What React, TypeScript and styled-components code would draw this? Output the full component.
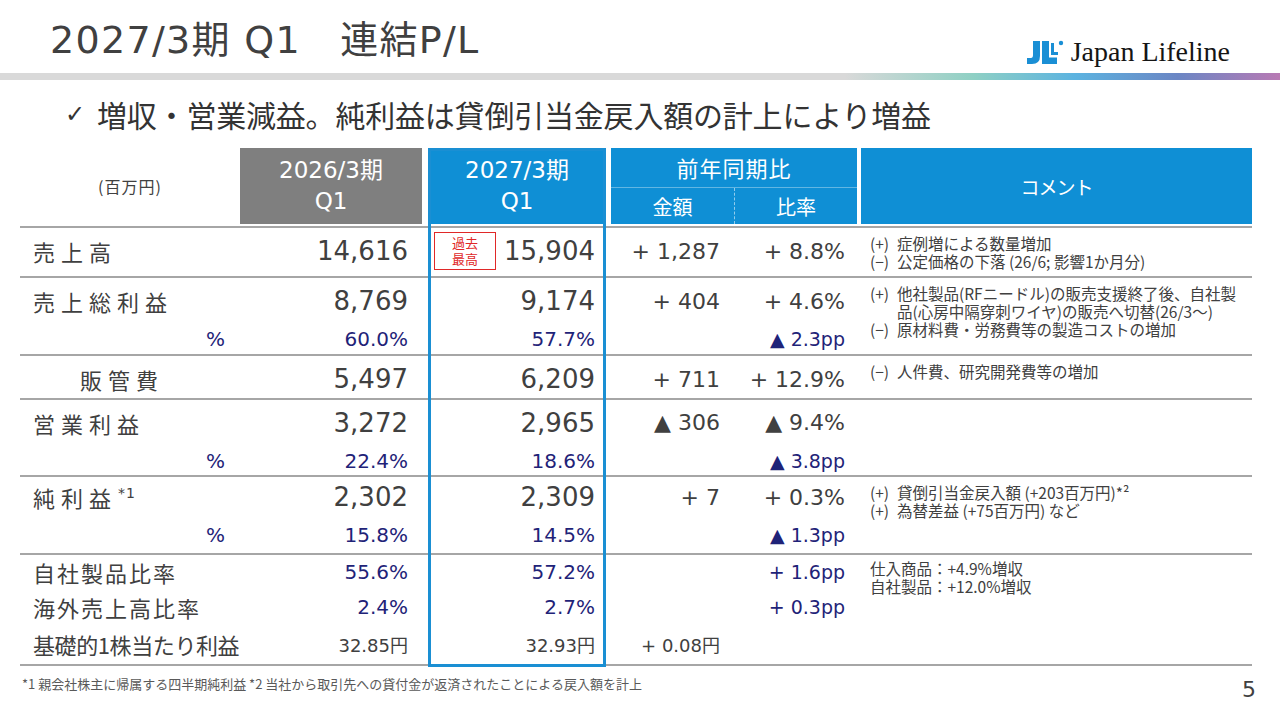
import React, { ReactNode } from "react";
import styled, { createGlobalStyle, css } from "styled-components";

const JP = `"Noto Sans CJK JP", "Noto Sans", sans-serif`;
const NUM = `"DejaVu Sans", "Noto Sans CJK JP", sans-serif`;
const SERIF = `"Liberation Serif", "DejaVu Serif", serif`;

const C = {
  text: "#404040",
  navy: "#1f2378",
  blue: "#0f8fd5",
  frame: "#1a8fd3",
  gray: "#7f7f7f",
  rule: "#a6a6a6",
  red: "#e02828",
};

const COLS =
  "[label] 220px [y26] 182px 6px [y27] 178px 5px [amt] 124px [rate] 122px 4px [cmt] 391px";

type Col = "label" | "y26" | "y27" | "amt" | "rate" | "cmt";
const PAD: Record<Col, number> = { label: 0, y26: 14, y27: 11, amt: 15, rate: 12, cmt: 0 };

const GlobalStyle = createGlobalStyle`
  html, body { margin: 0; padding: 0; background: #ffffff; }
  body { font-family: ${JP}; color: ${C.text}; }
  * { box-sizing: border-box; }
`;

const Page = styled.div`
  width: 1280px;
  height: 720px;
  overflow: hidden;
  background: #fff;
  display: flex;
  flex-direction: column;
`;

const TitleBar = styled.header`
  height: 73px;
  flex: none;
  display: flex;
  justify-content: space-between;
  align-items: flex-start;
  padding: 0 50px;
`;

const Title = styled.h1`
  margin: 18px 0 0;
  font-family: ${NUM};
  font-weight: 400;
  font-size: 38px;
  line-height: 44px;
  letter-spacing: 1.3px;
  color: ${C.text};
  white-space: pre;
`;

const Brand = styled.div`
  margin-top: 37px;
  display: flex;
  align-items: center;
  gap: 5px;
`;

const BrandName = styled.span`
  font-family: ${SERIF};
  font-size: 28px;
  line-height: 30px;
  color: #151515;
`;

const Rainbow = styled.div`
  height: 7px;
  flex: none;
  background: linear-gradient(
    90deg,
    #d9d9d9 0%,
    #d9d9d9 66%,
    #8fd0c4 76%,
    #5cb3e0 84%,
    #6b86c4 92%,
    #b97ab4 100%
  );
`;

const Lead = styled.p`
  margin: 14px 0 0 65px;
  height: 40px;
  display: flex;
  align-items: center;
  font-family: ${JP};
  font-size: 30px;
  letter-spacing: -0.2px;
  color: #333;
`;

const Check = styled.span`
  font-family: "DejaVu Sans", sans-serif;
  font-size: 24px;
  width: 32px;
  flex: none;
`;

const Table = styled.section`
  position: relative;
  margin: 14px 0 0 20px;
  width: 1232px;
  flex: none;
`;

const HighlightFrame = styled.div`
  position: absolute;
  left: 408px;
  top: 0;
  width: 178px;
  height: 519px;
  border: 3px solid ${C.frame};
  pointer-events: none;
`;

const Head = styled.div`
  display: grid;
  grid-template-columns: ${COLS};
  grid-template-rows: 40px 36px;
  height: 76px;
  margin-bottom: 2px;
`;

type Tone = "none" | "gray" | "blue";

const HeadCell = styled.div<{ $col: string; $rows?: string; $tone: Tone; $size?: number; $split?: "bottom" | "right" }>`
  grid-column: ${(p) => p.$col};
  grid-row: ${(p) => p.$rows ?? "1 / 3"};
  display: flex;
  flex-direction: column;
  align-items: center;
  justify-content: center;
  background: ${(p) => (p.$tone === "gray" ? C.gray : p.$tone === "blue" ? C.blue : "transparent")};
  color: ${(p) => (p.$tone === "none" ? C.text : "#fff")};
  font-family: ${NUM};
  font-size: ${(p) => p.$size ?? 23}px;
  line-height: 31px;
  ${(p) =>
    p.$split === "bottom" &&
    css`
      border-bottom: 1px solid rgba(255, 255, 255, 0.35);
    `}
  ${(p) =>
    p.$split === "right" &&
    css`
      border-right: 1px dashed rgba(255, 255, 255, 0.55);
    `}
`;

const HeadJP = styled.span<{ $sp?: number }>`
  font-family: ${JP};
  letter-spacing: ${(p) => p.$sp ?? 0}px;
`;

const Row = styled.div<{ $h: number; $last?: boolean }>`
  display: grid;
  grid-template-columns: ${COLS};
  height: ${(p) => p.$h + (p.$last ? 2 : 0)}px;
  border-top: 2px solid ${C.rule};
  ${(p) =>
    p.$last &&
    css`
      border-bottom: 2px solid ${C.rule};
    `}
`;

const Cell = styled.div<{ $col: Col }>`
  grid-column: ${(p) => p.$col} / span 1;
  display: flex;
  flex-direction: column;
  align-items: ${(p) => (p.$col === "label" || p.$col === "cmt" ? "stretch" : "flex-end")};
  padding-right: ${(p) => PAD[p.$col]}px;
  min-width: 0;
`;

type Kind = "main" | "diff" | "sub" | "pp" | "yen";
const SIZE: Record<Kind, number> = { main: 26, diff: 22, sub: 20, pp: 19, yen: 18 };

const Val = styled.div<{ $kind: Kind; $h: number; $navy?: boolean; $wide?: boolean }>`
  height: ${(p) => p.$h}px;
  flex: none;
  display: flex;
  align-items: center;
  justify-content: space-between;
  align-self: ${(p) => (p.$wide ? "stretch" : "auto")};
  font-family: ${NUM};
  font-size: ${(p) => SIZE[p.$kind]}px;
  color: ${(p) => (p.$navy ? C.navy : C.text)};
  white-space: pre;
`;

const Badge = styled.div`
  margin-left: 6px;
  padding: 2px 0;
  width: 62px;
  height: 38px;
  border: 1.5px solid ${C.red};
  color: ${C.red};
  font-family: ${JP};
  font-size: 13px;
  line-height: 16px;
  text-align: center;
`;

const Label = styled.div<{ $h: number; $sp: number; $indent?: boolean }>`
  height: ${(p) => p.$h}px;
  flex: none;
  display: flex;
  align-items: center;
  padding-left: ${(p) => (p.$indent ? 60 : 13)}px;
  font-family: ${JP};
  font-size: 22px;
  letter-spacing: ${(p) => p.$sp}px;
  color: ${C.text};
  white-space: nowrap;
`;

const Sup = styled.span`
  font-family: ${NUM};
  font-size: 14px;
  letter-spacing: 1px;
  vertical-align: 9px;
  margin-left: 1px;
`;

const PctLabel = styled.div<{ $h: number }>`
  height: ${(p) => p.$h}px;
  flex: none;
  display: flex;
  align-items: center;
  justify-content: flex-end;
  padding-right: 15px;
  font-family: ${NUM};
  font-size: 20px;
  color: ${C.navy};
`;

const Comment = styled.div<{ $top?: number }>`
  grid-column: cmt / span 1;
  padding: ${(p) => p.$top ?? 6}px 0 0 9px;
  font-family: ${JP};
  font-size: 15.5px;
  line-height: 18px;
  color: ${C.text};
`;

const Item = styled.div`
  display: flex;
  white-space: nowrap;
`;

const Mark = styled.span`
  flex: none;
  width: 27px;
`;

const Footer = styled.footer`
  display: flex;
  justify-content: space-between;
  align-items: flex-start;
  padding: 0 24px 0 22px;
  margin-top: 9px;
`;

const Note = styled.p`
  margin: 0;
  font-family: ${JP};
  font-size: 13px;
  line-height: 18px;
  color: #595959;
`;

const PageNo = styled.span`
  margin-top: 2px;
  font-family: ${NUM};
  font-size: 22px;
  line-height: 26px;
  color: ${C.text};
`;

/* ---------- data ---------- */

type V = { t: string; k: Kind; navy?: boolean } | null;
type LabelSpec = { t: ReactNode; sp: number; indent?: boolean } | "pct";

interface RowData {
  h: number;
  lines: number[];
  labels: LabelSpec[];
  y26: V[];
  y27: V[];
  amt: V[];
  rate: V[];
  badge?: boolean;
  comment?: ReactNode;
  commentTop?: number;
  last?: boolean;
}

const m = (t: string): V => ({ t, k: "main" });
const d = (t: string): V => ({ t, k: "diff" });
const s = (t: string): V => ({ t, k: "sub", navy: true });
const pp = (t: string): V => ({ t, k: "pp", navy: true });
const yen = (t: string): V => ({ t, k: "yen" });

const rows: RowData[] = [
  {
    h: 50,
    lines: [46],
    labels: [{ t: "売上高", sp: 6 }],
    y26: [m("14,616")],
    y27: [m("15,904")],
    amt: [d("+ 1,287")],
    rate: [d("+ 8.8%")],
    badge: true,
    comment: (
      <>
        <Item>
          <Mark>(+)</Mark>症例増による数量増加
        </Item>
        <Item>
          <Mark>(−)</Mark>公定価格の下落 (26/6; 影響1か月分)
        </Item>
      </>
    ),
  },
  {
    h: 78,
    lines: [46, 30],
    labels: [{ t: "売上総利益", sp: 6 }, "pct"],
    y26: [m("8,769"), s("60.0%")],
    y27: [m("9,174"), s("57.7%")],
    amt: [d("+ 404"), null],
    rate: [d("+ 4.6%"), pp("▲ 2.3pp")],
    comment: (
      <>
        <Item>
          <Mark>(+)</Mark>
          <span>
            他社製品(RFニードル)の販売支援終了後、自社製
            <br />
            品(心房中隔穿刺ワイヤ)の販売へ切替(26/3～)
          </span>
        </Item>
        <Item>
          <Mark>(−)</Mark>原材料費・労務費等の製造コストの増加
        </Item>
      </>
    ),
  },
  {
    h: 44,
    lines: [46],
    labels: [{ t: "販管費", sp: 6, indent: true }],
    y26: [m("5,497")],
    y27: [m("6,209")],
    amt: [d("+ 711")],
    rate: [d("+ 12.9%")],
    comment: (
      <Item>
        <Mark>(−)</Mark>人件費、研究開発費等の増加
      </Item>
    ),
  },
  {
    h: 77,
    lines: [45, 32],
    labels: [{ t: "営業利益", sp: 6 }, "pct"],
    y26: [m("3,272"), s("22.4%")],
    y27: [m("2,965"), s("18.6%")],
    amt: [d("▲ 306"), null],
    rate: [d("▲ 9.4%"), pp("▲ 3.8pp")],
  },
  {
    h: 78,
    lines: [40, 36],
    labels: [
      {
        t: (
          <>
            純利益<Sup>*1</Sup>
          </>
        ),
        sp: 6,
      },
      "pct",
    ],
    y26: [m("2,302"), s("15.8%")],
    y27: [m("2,309"), s("14.5%")],
    amt: [d("+ 7"), null],
    rate: [d("+ 0.3%"), pp("▲ 1.3pp")],
    comment: (
      <>
        <Item>
          <Mark>(+)</Mark>貸倒引当金戻入額 (+203百万円)*²
        </Item>
        <Item>
          <Mark>(+)</Mark>為替差益 (+75百万円) など
        </Item>
      </>
    ),
  },
  {
    h: 111,
    lines: [33, 37, 37],
    labels: [
      { t: "自社製品比率", sp: 2 },
      { t: "海外売上高比率", sp: 2 },
      { t: "基礎的1株当たり利益", sp: -0.4 },
    ],
    y26: [s("55.6%"), s("2.4%"), yen("32.85円")],
    y27: [s("57.2%"), s("2.7%"), yen("32.93円")],
    amt: [null, null, yen("+ 0.08円")],
    rate: [pp("+ 1.6pp"), pp("+ 0.3pp"), null],
    commentTop: 4,
    comment: (
      <>
        <Item>仕入商品：+4.9%増収</Item>
        <Item>自社製品：+12.0%増収</Item>
      </>
    ),
    last: true,
  },
];

/* ---------- parts ---------- */

const LogoMark = () => (
  <svg width="40" height="25" viewBox="0 0 40 25" aria-label="JLL">
    <path d="M7 1 H14 V16 Q14 24 6 24 H1 V18 H5 Q7 18 7 15 Z" fill="#1a8fd5" />
    <path d="M16 1 H23 V17.5 H31 V24 H16 Z" fill="#1a8fd5" />
    <path d="M25 3 H28 V12 H32 V15 H25 Z" fill="#1a8fd5" />
    <circle cx="35" cy="3" r="2.2" fill="#1a8fd5" />
  </svg>
);

const ValueColumn = ({ col, vals, lines, badge }: { col: Col; vals: V[]; lines: number[]; badge?: boolean }) => (
  <Cell $col={col}>
    {lines.map((h, i) => {
      const v = vals[i];
      if (!v) return <Val key={i} $kind="main" $h={h} />;
      const withBadge = badge && i === 0;
      return (
        <Val key={i} $kind={v.k} $h={h} $navy={v.navy} $wide={withBadge}>
          {withBadge && (
            <Badge>
              過去
              <br />
              最高
            </Badge>
          )}
          {v.t}
        </Val>
      );
    })}
  </Cell>
);

const BodyRow = ({ r }: { r: RowData }) => (
  <Row $h={r.h} $last={r.last}>
    <Cell $col="label">
      {r.lines.map((h, i) => {
        const l = r.labels[i];
        if (l === "pct") return <PctLabel key={i} $h={h}>%</PctLabel>;
        return (
          <Label key={i} $h={h} $sp={l.sp} $indent={l.indent}>
            <span>{l.t}</span>
          </Label>
        );
      })}
    </Cell>
    <ValueColumn col="y26" vals={r.y26} lines={r.lines} />
    <ValueColumn col="y27" vals={r.y27} lines={r.lines} badge={r.badge} />
    <ValueColumn col="amt" vals={r.amt} lines={r.lines} />
    <ValueColumn col="rate" vals={r.rate} lines={r.lines} />
    <Comment $top={r.commentTop}>{r.comment}</Comment>
  </Row>
);

export default function App() {
  return (
    <>
      <GlobalStyle />
      <Page>
        <TitleBar>
          <Title>{"2027/3期 Q1　連結P/L"}</Title>
          <Brand>
            <LogoMark />
            <BrandName>Japan Lifeline</BrandName>
          </Brand>
        </TitleBar>
        <Rainbow />
        <Lead>
          <Check>✓</Check>
          増収・営業減益。純利益は貸倒引当金戻入額の計上により増益
        </Lead>
        <Table>
          <Head>
            <HeadCell $col="label / span 1" $tone="none" $size={16}>
              <HeadJP $sp={1}>(百万円)</HeadJP>
            </HeadCell>
            <HeadCell $col="y26 / span 1" $tone="gray">
              <span>2026/3期</span>
              <span>Q1</span>
            </HeadCell>
            <HeadCell $col="y27 / span 1" $tone="blue">
              <span>2027/3期</span>
              <span>Q1</span>
            </HeadCell>
            <HeadCell $col="amt / span 2" $rows="1 / 2" $tone="blue" $size={22} $split="bottom">
              <HeadJP $sp={1}>前年同期比</HeadJP>
            </HeadCell>
            <HeadCell $col="amt / span 1" $rows="2 / 3" $tone="blue" $size={20} $split="right">
              <HeadJP>金額</HeadJP>
            </HeadCell>
            <HeadCell $col="rate / span 1" $rows="2 / 3" $tone="blue" $size={20}>
              <HeadJP>比率</HeadJP>
            </HeadCell>
            <HeadCell $col="cmt / span 1" $tone="blue" $size={19}>
              <HeadJP $sp={-1}>コメント</HeadJP>
            </HeadCell>
          </Head>
          {rows.map((r, i) => (
            <BodyRow key={i} r={r} />
          ))}
          <HighlightFrame />
        </Table>
        <Footer>
          <Note>*1 親会社株主に帰属する四半期純利益 *2 当社から取引先への貸付金が返済されたことによる戻入額を計上</Note>
          <PageNo>5</PageNo>
        </Footer>
      </Page>
    </>
  );
}
